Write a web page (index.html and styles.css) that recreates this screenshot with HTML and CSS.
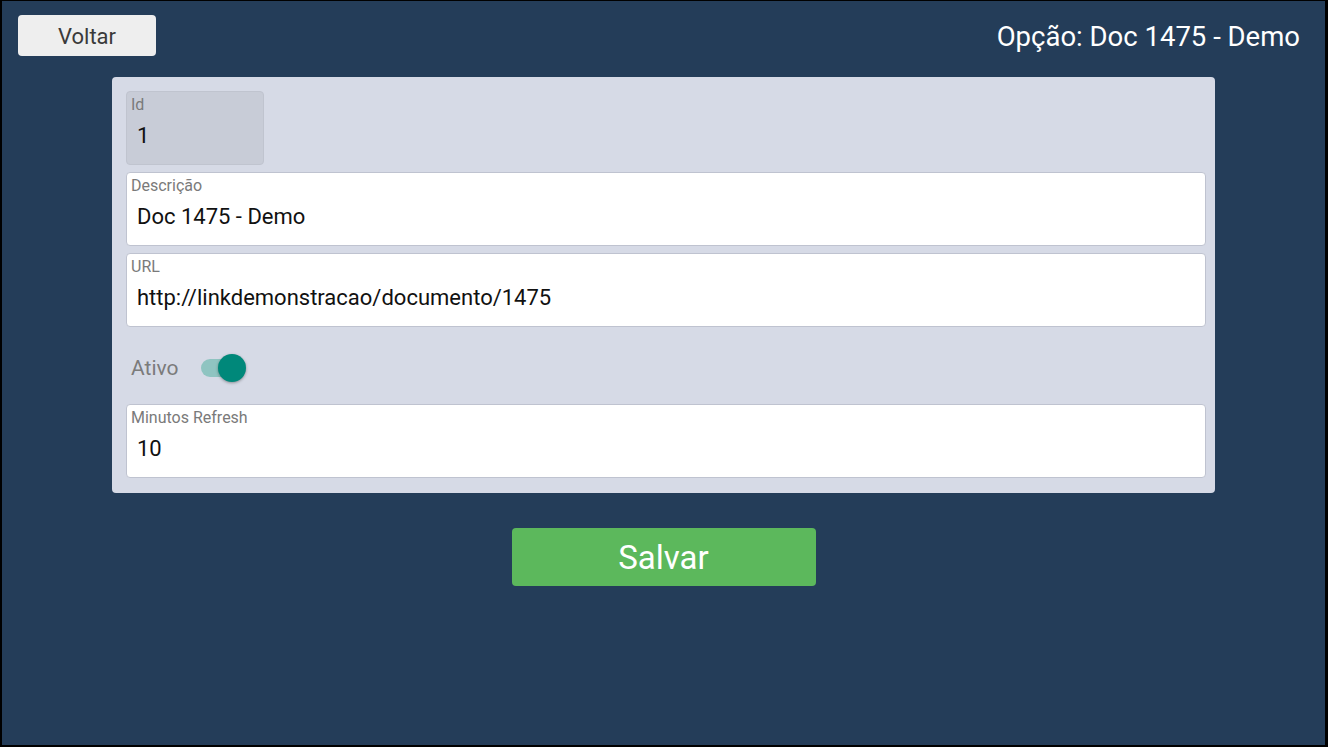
FILE: index.html
```html
<!DOCTYPE html>
<html lang="pt-BR">
<head>
  <meta charset="UTF-8" />
  <meta name="viewport" content="width=device-width, initial-scale=1.0"/>
  <title>Opção</title>
  <link rel="stylesheet" href="styles.css">
</head>
<body>

  <div class="screen">

    <div class="header">
      <button class="btn-back">Voltar</button>
      <div class="title">Opção: Doc 1475 - Demo</div>
    </div>

    <div class="panel">
      <div class="field field-id disabled">
        <label>Id</label>
        <div class="value">1</div>
      </div>

      <div class="field">
        <label>Descrição</label>
        <div class="value">Doc 1475 - Demo</div>
      </div>

      <div class="field">
        <label>URL</label>
        <div class="value">http://linkdemonstracao/documento/1475</div>
      </div>

      <div class="switch-row">
        <span class="switch-label">Ativo</span>
        <span class="switch on">
          <span class="track"></span>
          <span class="thumb"></span>
        </span>
      </div>

      <div class="field">
        <label>Minutos Refresh</label>
        <div class="value">10</div>
      </div>
    </div>

    <div class="actions">
      <button class="btn-save">Salvar</button>
    </div>

  </div>

</body>
</html>
```

FILE: styles.css
```css
* {
  box-sizing: border-box;
  margin: 0;
  padding: 0;
}

body {
  background: #000;
  font-family: Roboto, 'Noto Sans', sans-serif;
  overflow: hidden;
}

.screen {
  margin: 1px 3px 2px 2px;
  height: 744px;
  background: #243d59;
}

.header {
  display: flex;
  justify-content: space-between;
  align-items: flex-start;
  padding: 14px 25px 0 16px;
}

.btn-back {
  width: 138px;
  height: 41px;
  padding-top: 2px;
  background: #eeeeee;
  border: none;
  border-radius: 4px;
  font-family: Roboto, sans-serif;
  font-size: 22px;
  color: #3a3a3a;
}

.title {
  font-size: 27.5px;
  line-height: 32px;
  color: #fff;
  margin-top: 6px;
}

.panel {
  margin: 21px 110px 0;
  background: #d6dae6;
  border-radius: 4px;
  padding: 14px 9px 15px 14px;
  display: flex;
  flex-direction: column;
  gap: 7px;
}

.field {
  height: 74px;
  background: #fff;
  border: 1px solid #bfc3d0;
  border-radius: 4px;
  padding: 4px 4px;
}

.field-id {
  width: 138px;
}

.field.disabled {
  background: #c8ccd7;
  border-color: #c0c4cf;
}

.field label {
  display: block;
  font-size: 16px;
  line-height: 18px;
  color: #7a7a7a;
}

.field .value {
  font-size: 22px;
  line-height: 24px;
  color: #111;
  margin-top: 10px;
  padding-left: 6px;
}

.switch-row {
  height: 63px;
  padding: 5px 0 0 5px;
  display: flex;
  align-items: center;
  gap: 22px;
}

.switch-label {
  font-size: 21px;
  color: #7b7b7b;
}

.switch {
  position: relative;
  width: 45px;
  height: 28px;
}

.switch .track {
  position: absolute;
  left: 0;
  top: 5px;
  width: 38px;
  height: 18px;
  border-radius: 9px;
  background: #8fc4c1;
}

.switch .thumb {
  position: absolute;
  right: 0;
  top: 0;
  width: 28px;
  height: 28px;
  border-radius: 50%;
  background: #00887a;
  box-shadow: 0 1px 3px rgba(0,0,0,0.35);
}

.actions {
  display: flex;
  justify-content: center;
  margin-top: 35px;
}

.btn-save {
  width: 304px;
  height: 58px;
  background: #5cb85c;
  border: none;
  border-radius: 4px;
  font-family: Roboto, sans-serif;
  font-size: 33px;
  color: #fff;
}
```
